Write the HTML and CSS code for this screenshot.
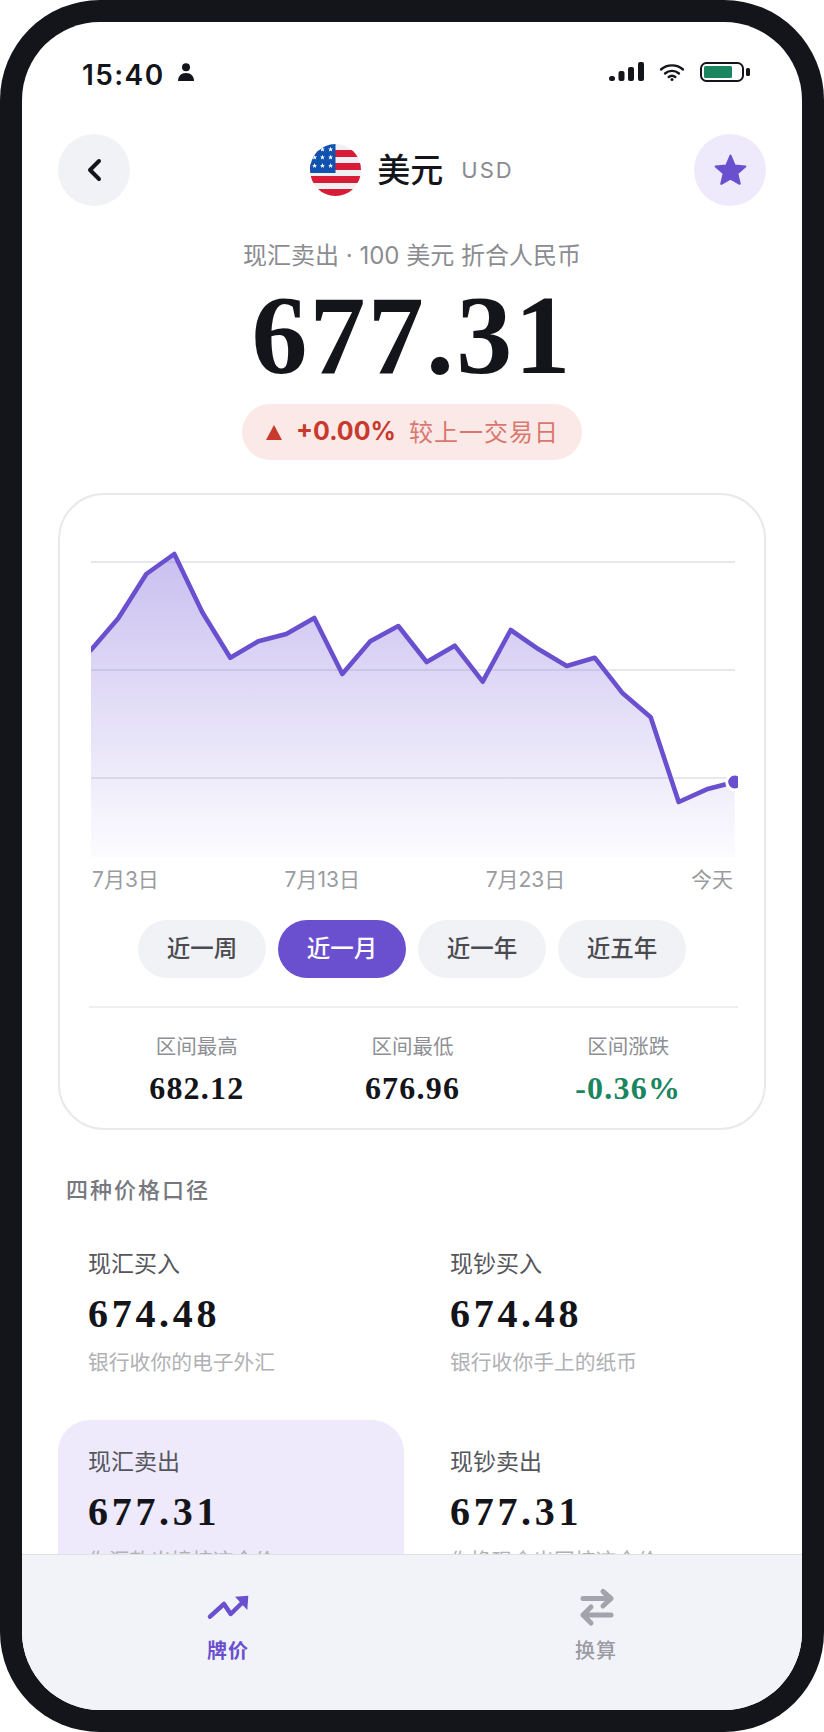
FILE: index.html
```html
<!DOCTYPE html>
<html lang="zh-CN">
<head>
<meta charset="utf-8">
<title>美元 USD</title>
<link rel="stylesheet" href="styles.css">
</head>
<body>
<div class="phone">
  <div class="screen">
    <div class="status">
      <div class="status-left">
        <span class="clock">15:40</span>
        <svg class="person" width="16" height="18" viewBox="0 0 16 18"><circle cx="8" cy="4.2" r="4"/><path d="M0 18c0-4.6 3-8 8-8s8 3.400 8 8z"/></svg>
      </div>
      <div class="status-right">
        <svg width="35" height="19" viewBox="0 0 35 19" class="ink"><rect x="0" y="14" width="6" height="5" rx="2.500"/><rect x="9.500" y="9" width="6" height="10" rx="2"/><rect x="19" y="5" width="6" height="14" rx="2"/><rect x="29" y="0" width="6" height="19" rx="2"/></svg>
        <svg width="24" height="18" viewBox="0 0 24 18" class="wifi"><path d="M1 6.500C7 1 17 1 23 6.500"/><path d="M5 10.500c4-3.500 10-3.500 14 0"/><path d="M8.700 14c2-1.600 4.600-1.600 6.600 0"/><circle cx="12" cy="16.500" r="1.500" class="wifi-dot"/></svg>
        <svg width="50" height="20" viewBox="0 0 50 20"><rect x="1" y="1" width="42" height="18" rx="5.500" fill="none" stroke="#14151a" stroke-width="2"/><rect x="4" y="4" width="28" height="12" rx="1.500" fill="#1b8560"/><rect x="46" y="6" width="4" height="8" rx="1.500" fill="#14151a"/></svg>
      </div>
    </div>

    <div class="content">
      <div class="topbar">
        <div class="round round-grey">
          <svg width="16" height="24" viewBox="0 0 16 24"><path d="M13 3 4 12l9 9" fill="none" stroke="#14151a" stroke-width="4" stroke-linecap="round" stroke-linejoin="round"/></svg>
        </div>
        <div class="title">
          <svg class="flag" width="51" height="52" viewBox="0 0 52 52" preserveAspectRatio="none">
            <defs>
              <clipPath id="flagClip"><circle cx="26" cy="26" r="26"/></clipPath>
              <polygon id="st" points="0,-2.600 .7,-.8 2.500,-.8 1.100,.3 1.600,2.200 0,1.100 -1.600,2.200 -1.100,.3 -2.500,-.8 -.7,-.8" fill="#fff"/>
            </defs>
            <g clip-path="url(#flagClip)">
              <rect width="52" height="52" fill="#f0f0f3"/>
              <rect y="6" width="52" height="7" fill="#d81c38"/>
              <rect y="19" width="52" height="7" fill="#d81c38"/>
              <rect y="32" width="52" height="7" fill="#d81c38"/>
              <rect y="45" width="52" height="7" fill="#d81c38"/>
              <rect width="26" height="29" fill="#0f52b0"/>
              <use href="#st" x="12.700" y="5.300"/><use href="#st" x="21" y="5.300"/>
              <use href="#st" x="4.700" y="13.300"/><use href="#st" x="12.700" y="13.300"/><use href="#st" x="21" y="13.300"/>
              <use href="#st" x="4.700" y="21.700"/><use href="#st" x="12.700" y="21.700"/><use href="#st" x="21" y="21.700"/>
            </g>
          </svg>
          <span class="title-name">美元</span>
          <span class="title-code">USD</span>
        </div>
        <div class="round round-purple">
          <svg width="37" height="36" viewBox="0 0 34 34"><path d="M17 3.500l4 9.300 10 .9-7.600 6.500 2.300 9.800L17 25l-8.700 5 2.300-9.800L3 13.700l10-.9z" fill="#6a4fcf" stroke="#6a4fcf" stroke-width="2" stroke-linejoin="round"/></svg>
        </div>
      </div>

      <div class="hero">
        <div class="hero-sub">现汇卖出 · 100 美元 折合人民币</div>
        <div class="hero-num">677.31</div>
        <div class="pill">
          <span class="tri"></span>
          <span class="pill-pct">+0.00%</span>
          <span class="pill-note">较上一交易日</span>
        </div>
      </div>

      <div class="card">
        <svg class="chart" width="647" height="312" viewBox="91 545 647 312">
          <defs>
            <linearGradient id="area" x1="0" y1="0" x2="0" y2="1">
              <stop offset="0" stop-color="#6a4fd4" stop-opacity=".36"/>
              <stop offset="1" stop-color="#6a4fd4" stop-opacity=".02"/>
            </linearGradient>
          </defs>
          <path d="M91 562H735M91 670H735M91 778H735" stroke="#e8e8ec" stroke-width="2" fill="none"/>
          <path d="M91 650 118.300 618.300 146.300 574 174.300 554 202.300 612.300 230.300 657.700 258.300 641.300 286.300 634 314.300 618 342.300 674 370.300 641.300 398.300 626 426.700 662 454.700 645.700 482.700 681.700 510.700 630 538.700 649.300 566.700 666 594.700 657.700 622.700 693.300 650.700 717.300 678.700 802 706.700 789.300 734.700 782V857H91Z" fill="url(#area)"/>
          <polyline points="91,650 118.300,618.300 146.300,574 174.300,554 202.300,612.300 230.300,657.700 258.300,641.300 286.300,634 314.300,618 342.300,674 370.300,641.300 398.300,626 426.700,662 454.700,645.700 482.700,681.700 510.700,630 538.700,649.300 566.700,666 594.700,657.700 622.700,693.300 650.700,717.300 678.700,802 706.700,789.300 734.700,782" fill="none" stroke="#6a4fcf" stroke-width="4.600" stroke-linejoin="round" stroke-linecap="round"/>
          <circle cx="734.700" cy="782" r="8" fill="#6a4fcf" stroke="#fff" stroke-width="3"/>
        </svg>
        <div class="axis">
          <span>7月3日</span><span>7月13日</span><span>7月23日</span><span>今天</span>
        </div>
        <div class="ranges">
          <span class="range">近一周</span>
          <span class="range range-on">近一月</span>
          <span class="range">近一年</span>
          <span class="range">近五年</span>
        </div>
        <div class="stats">
          <div class="stat"><div class="stat-label">区间最高</div><div class="stat-val">682.12</div></div>
          <div class="stat"><div class="stat-label">区间最低</div><div class="stat-val">676.96</div></div>
          <div class="stat"><div class="stat-label">区间涨跌</div><div class="stat-val stat-down">-0.36%</div></div>
        </div>
      </div>

      <div class="section">四种价格口径</div>
      <div class="quotes">
        <div class="quote"><div class="q-label">现汇买入</div><div class="q-val">674.48</div><div class="q-sub">银行收你的电子外汇</div></div>
        <div class="quote"><div class="q-label">现钞买入</div><div class="q-val">674.48</div><div class="q-sub">银行收你手上的纸币</div></div>
        <div class="quote quote-on"><div class="q-label">现汇卖出</div><div class="q-val">677.31</div><div class="q-sub">你汇款出境按这个价</div></div>
        <div class="quote"><div class="q-label">现钞卖出</div><div class="q-val">677.31</div><div class="q-sub">你换现金出国按这个价</div></div>
      </div>
    </div>

    <div class="tabbar">
      <div class="tab tab-on">
        <svg width="44" height="40" viewBox="0 0 44 40"><path d="M4 29.700 18 17l6.700 10L39 13" fill="none" stroke="#6a4fcf" stroke-width="4.500" stroke-linecap="round" stroke-linejoin="round"/><path d="M29 9.700 42.300 8.700 41.300 23z" fill="#6a4fcf"/></svg>
        <span>牌价</span>
      </div>
      <div class="tab">
        <svg width="44" height="40" viewBox="0 0 44 40"><path d="M9 11.500h28M29 4.500l8 7-8 7.500M37 28H9M17 20l-8 8 8 8" fill="none" stroke="#a2a3ac" stroke-width="5" stroke-linecap="round" stroke-linejoin="round"/></svg>
        <span>换算</span>
      </div>
    </div>
  </div>
</div>
</body>
</html>
```

FILE: styles.css
```css
* { box-sizing: border-box; }
html, body { margin: 0; padding: 0; background: #fff; }
body { font-family: "Inter", "Noto Sans CJK SC", sans-serif; color: #14151a; }

.phone {
  width: 824px; height: 1732px;
  background: #14151a;
  border-radius: 100px;
  padding: 22px;
}
.screen {
  width: 780px; height: 1688px;
  background: #fff;
  border-radius: 78px;
  overflow: hidden;
  display: flex; flex-direction: column;
}

/* status bar */
.status {
  height: 112px; flex: none;
  padding: 40px 52px 0 60px;
  display: flex; justify-content: space-between; align-items: flex-start;
}
.status-left { display: flex; align-items: center; gap: 13px; height: 22px; }
.clock { font-size: 28px; font-weight: 600; line-height: 22px; letter-spacing: 1.400px; margin-top: 4px; }
.person { fill: #14151a; margin-top: -2px; }
.status-right { display: flex; align-items: flex-start; gap: 16px; }
.ink { fill: #14151a; }
.wifi { fill: none; stroke: #14151a; stroke-width: 2.400; stroke-linecap: round; margin-top: 1px; }
.wifi-dot { fill: #14151a; stroke: none; }

.content { flex: 1; min-height: 0; overflow: hidden; }

/* header */
.topbar {
  height: 72px; padding: 0 36px;
  display: flex; justify-content: space-between; align-items: center;
}
.round { width: 72px; height: 72px; border-radius: 50%; display: flex; align-items: center; justify-content: center; }
.round-grey { background: #f1f2f5; }
.round-purple { background: #eeeafc; }
.title { display: flex; align-items: center; }
.flag { display: block; margin-right: 16px; }
.title-name { font-size: 33px; font-weight: 500; line-height: 44px; margin-right: 18px; }
.title-code { font-size: 22px; line-height: 44px; letter-spacing: 2px; color: #8a8b90; }

/* hero */
.hero { display: flex; flex-direction: column; align-items: center; }
.hero-sub { margin-top: 33px; font-size: 24px; line-height: 34px; color: #8b8c91; }
.hero-num {
  margin-top: 7px;
  font-family: "Liberation Serif", serif; font-weight: 700;
  font-size: 112px; line-height: 110px; letter-spacing: 2.200px;
}
.pill {
  margin-top: 14px; height: 56px; padding: 0 23px 3px 24px;
  border-radius: 28px; background: #fbe9e7;
  display: flex; align-items: center;
}
.tri { width: 0; height: 0; border-left: 8px solid transparent; border-right: 8px solid transparent; border-bottom: 15px solid #c8392e; margin: 3px 14px 0 0; }
.pill-pct { font-size: 25px; font-weight: 700; color: #c8392e; margin-right: 13px; }
.pill-note { font-size: 24px; color: #d9776f; letter-spacing: 1px; }

/* chart card */
.card {
  margin: 33px 36px 0;
  height: 637px;
  border: 2px solid #e9e9ec;
  border-radius: 46px;
  padding: 50px 26px 0 29px;
}
.chart { display: block; margin: 0 -1px 0 2px; }
.axis {
  margin: 9px 5px 0 3px; height: 28px;
  display: flex; justify-content: space-between;
  font-size: 21px; line-height: 28px; color: #9a9ba0;
}
.ranges { margin: 26px 3px 0 0; display: flex; justify-content: center; gap: 12px; }
.range {
  width: 128px; height: 58px; border-radius: 29px;
  background: #f1f2f5; color: #4a4b50;
  font-size: 23.500px; font-weight: 500; line-height: 58px; text-align: center;
}
.range-on { background: #6a4fcf; color: #fff; }
.stats {
  margin-top: 28px; padding: 25px 2px 0 0;
  border-top: 2px solid #efeff1;
  display: grid; grid-template-columns: repeat(3, 1fr);
}
.stat { text-align: center; }
.stat-label { font-size: 20.500px; line-height: 28px; color: #8e8f94; }
.stat-val {
  margin-top: 7px;
  font-family: "Liberation Serif", serif; font-weight: 700;
  font-size: 32px; line-height: 40px; letter-spacing: 1.200px; color: #14151a;
}
.stat-down { color: #1b8560; }

/* quotes */
.section {
  margin: 45px 0 0 44px;
  font-size: 22px; font-weight: 500; line-height: 30px; letter-spacing: 2px; color: #77787e;
}
.quotes {
  margin: 17px 36px 0;
  display: grid; grid-template-columns: 346px 346px; gap: 12px 16px;
}
.quote { height: 186px; padding: 27px 30px 0; border-radius: 32px; }
.quote-on { background: #eeeafc; }
.q-label { font-size: 23px; line-height: 30px; color: #55565c; }
.q-val {
  margin-top: 12px;
  font-family: "Liberation Serif", serif; font-weight: 700;
  font-size: 40px; line-height: 46px; letter-spacing: 3.700px;
}
.q-sub { margin-top: 12px; font-size: 20.800px; line-height: 28px; color: #b0b1b5; white-space: nowrap; }

/* tab bar */
.tabbar {
  height: 156px; flex: none;
  background: #f2f3f8;
  border-top: 1px solid #dfe0e4;
  display: flex; justify-content: center;
}
.tab {
  width: 368px; padding-top: 32px;
  display: flex; flex-direction: column; align-items: center;
  font-size: 20px; line-height: 28px; font-weight: 500; letter-spacing: 1px; color: #9a9ba3;
}
.tab svg { display: block; margin-bottom: 10px; }
.tab-on { color: #6a4fcf; font-weight: 700; }
```
